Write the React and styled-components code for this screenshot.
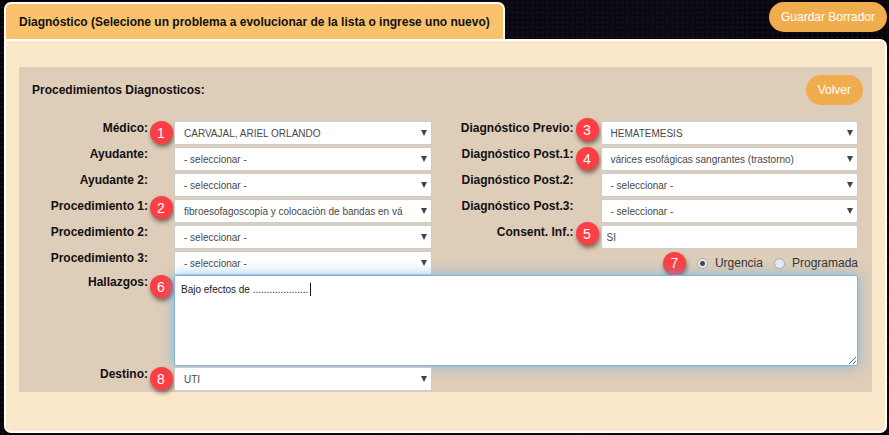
import React from 'react';
import styled, { createGlobalStyle } from 'styled-components';

const GlobalStyle = createGlobalStyle`
  * { box-sizing: border-box; }
  body {
    margin: 0;
    background-color: #06050b;
    background-image:
      radial-gradient(circle, #110e1a 1px, transparent 2px),
      linear-gradient(100deg, #030206 0%, #0b0914 70%, #010101 100%);
    background-size: 5px 5px, 100% 100%;
    color: #111;
    font-family: "Liberation Sans", Arial, sans-serif;
    font-size: 12px;
    line-height: 14px;
  }
  button, input, select, textarea { font: inherit; }
`;

const Page = styled.main`
  padding: 2px 2px 2px 4px;
`;

const Header = styled.header`
  display: flex;
  align-items: flex-start;
  justify-content: space-between;
`;

const Tab = styled.h1`
  margin: 0;
  padding: 11px 13px 10px;
  border: 2px solid #fff;
  border-bottom: 0;
  border-radius: 7px 7px 0 0;
  background: #fbc26d;
  font-size: 12px;
  font-weight: bold;
  line-height: 14px;
`;

const PillButton = styled.button`
  height: 30px;
  padding: 0 12px;
  border: 0;
  border-radius: 15px;
  background: #f0ad4e;
  color: #fff;
  cursor: pointer;
`;

const Panel = styled.section`
  padding: 26px 13px 39px;
  border: 2px solid #fff;
  border-radius: 0 7px 7px 7px;
  background: #fbe7ca;
`;

const Box = styled.div`
  padding: 8px 0 1px;
  background: #decdb8;
`;

const BoxHeader = styled.div`
  display: flex;
  align-items: center;
  justify-content: space-between;
  padding: 0 9px 0 13px;
`;

const BoxTitle = styled.h2`
  margin: 0;
  font-size: 12px;
  font-weight: bold;
`;

const Form = styled.form`
  display: grid;
  grid-template-columns: 155px minmax(0, 1fr) 169px minmax(0, 1fr);
  padding: 16px 14px 0 0;
`;

const Stack = styled.div`
  grid-column: span 2;
  display: flex;
  flex-direction: column;
  gap: 2px;
`;

const Row = styled.div`
  grid-column: ${({ $wide }) => ($wide ? '1 / -1' : 'span 2')};
  display: grid;
  grid-template-columns: ${({ $side }) => ($side === 'right' ? 142 : 129)}px ${({ $side }) => ($side === 'right' ? 27 : 26)}px minmax(0, 1fr);
  align-items: start;
`;

const Label = styled.label`
  font-weight: bold;
  text-align: right;
  white-space: nowrap;
`;

const BadgeCell = styled.span`
  display: flex;
  justify-content: center;
  height: 24px;
`;

const Badge = styled.span`
  display: grid;
  place-items: center;
  flex: none;
  width: 23px;
  height: 23px;
  margin-top: ${({ $raised }) => ($raised ? -3 : 0)}px;
  border-radius: 50%;
  background: #fb3f44;
  box-shadow: 1px 3px 4px rgba(60, 40, 40, 0.6);
  color: #fff;
  font-size: 14px;
`;

const SelectWrap = styled.div`
  position: relative;
`;

const SelectBox = styled.select`
  display: block;
  width: 100%;
  height: 24px;
  padding: 2px 18px 0 9px;
  appearance: none;
  border: 1px solid #ccc;
  border-radius: 2px;
  background: #fff;
  color: #484848;
  font-size: 10px;
`;

const Arrow = styled.svg`
  position: absolute;
  top: 9px;
  right: 5px;
  width: 6px;
  height: 6px;
  fill: #444;
  pointer-events: none;
`;

const TextInput = styled.input`
  width: 100%;
  height: 24px;
  padding: 0 5px;
  border: 1px solid #ccc;
  border-radius: 2px;
  background: #fff;
  color: #484848;
  font-size: 10px;
`;

const TextArea = styled.textarea`
  position: relative;
  display: block;
  width: 100%;
  height: 91px;
  margin-bottom: 1px;
  padding: 7px 6px;
  border: 1px solid #79b5e6;
  border-radius: 2px;
  outline: 0;
  background: linear-gradient(#111, #111) 135px 7px / 1px 13px no-repeat #fff;
  box-shadow: 0 0 14px rgba(102, 175, 233, 0.75);
  caret-color: transparent;
  color: #222;
  font-size: 10px;
  resize: both;
`;

const RadioRow = styled.div`
  display: flex;
  align-items: center;
  justify-content: flex-end;
  gap: 11px;
  height: 24px;
`;

const RadioLabel = styled.label`
  display: flex;
  align-items: center;
  gap: 7px;
  color: #333;
`;

const Radio = styled.input`
  width: 11px;
  height: 11px;
  margin: 0;
  appearance: none;
  border: 1px solid #a9acb0;
  border-radius: 50%;
  background: linear-gradient(#dfe3e8, #f4f5f7);
  &:checked {
    background: radial-gradient(circle, #444 2px, #e9ecf0 3px);
  }
`;

const EMPTY = '- seleccionar -';

const LEFT = [
  { id: 'medico', label: 'Médico:', value: 'CARVAJAL, ARIEL ORLANDO', badge: 1 },
  { id: 'ayudante', label: 'Ayudante:', value: EMPTY },
  { id: 'ayudante2', label: 'Ayudante 2:', value: EMPTY },
  { id: 'proc1', label: 'Procedimiento 1:', value: 'fibroesofagoscopia y colocaciòn de bandas en vá', badge: 2, raised: true },
  { id: 'proc2', label: 'Procedimiento 2:', value: EMPTY },
  { id: 'proc3', label: 'Procedimiento 3:', value: EMPTY },
];

const RIGHT = [
  { id: 'previo', label: 'Diagnóstico Previo:', value: 'HEMATEMESIS', badge: 3, raised: true },
  { id: 'post1', label: 'Diagnóstico Post.1:', value: 'várices esofágicas sangrantes (trastorno)', badge: 4 },
  { id: 'post2', label: 'Diagnóstico Post.2:', value: EMPTY },
  { id: 'post3', label: 'Diagnóstico Post.3:', value: EMPTY },
];

function Field({ id, label, badge, raised, side, wide, children }) {
  return (
    <Row $side={side} $wide={wide}>
      <Label htmlFor={id}>{label}</Label>
      <BadgeCell>{badge && <Badge $raised={raised}>{badge}</Badge>}</BadgeCell>
      {children}
    </Row>
  );
}

function SelectField({ value, ...field }) {
  return (
    <Field {...field}>
      <SelectWrap>
        <SelectBox id={field.id} defaultValue={value}>
          <option>{value}</option>
        </SelectBox>
        <Arrow viewBox="0 0 6 6" aria-hidden="true">
          <path d="M0 0h6L3 6z" />
        </Arrow>
      </SelectWrap>
    </Field>
  );
}

export default function App() {
  return (
    <>
      <GlobalStyle />
      <Page>
        <Header>
          <Tab>Diagnóstico (Selecione un problema a evolucionar de la lista o ingrese uno nuevo)</Tab>
          <PillButton type="button">Guardar Borrador</PillButton>
        </Header>
        <Panel>
          <Box>
            <BoxHeader>
              <BoxTitle>Procedimientos Diagnosticos:</BoxTitle>
              <PillButton type="button">Volver</PillButton>
            </BoxHeader>
            <Form>
              <Stack>
                {LEFT.map((field) => (
                  <SelectField key={field.id} {...field} />
                ))}
              </Stack>
              <Stack>
                {RIGHT.map((field) => (
                  <SelectField key={field.id} side="right" {...field} />
                ))}
                <Field id="consent" label="Consent. Inf.:" badge={5} raised side="right">
                  <TextInput id="consent" type="text" defaultValue="SI" />
                </Field>
                <RadioRow>
                  <Badge>7</Badge>
                  <RadioLabel>
                    <Radio type="radio" name="tipo" defaultChecked />
                    Urgencia
                  </RadioLabel>
                  <RadioLabel>
                    <Radio type="radio" name="tipo" />
                    Programada
                  </RadioLabel>
                </RadioRow>
              </Stack>
              <Field id="hallazgos" label="Hallazgos:" badge={6} wide>
                <TextArea id="hallazgos" defaultValue="Bajo efectos de ...................." />
              </Field>
              <SelectField id="destino" label="Destino:" value="UTI" badge={8} />
            </Form>
          </Box>
        </Panel>
      </Page>
    </>
  );
}
